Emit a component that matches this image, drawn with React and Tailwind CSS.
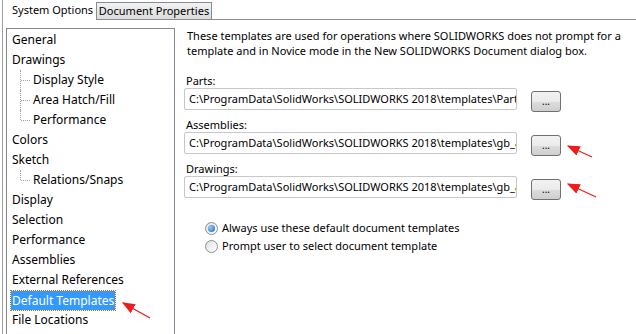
import React from 'react';

const noto = { fontFamily: '"Noto Sans", "Open Sans", sans-serif' };

const tree = [
  { label: 'General' },
  { label: 'Drawings' },
  { label: 'Display Style', child: true },
  { label: 'Area Hatch/Fill', child: true },
  { label: 'Performance', child: true, last: true },
  { label: 'Colors' },
  { label: 'Sketch' },
  { label: 'Relations/Snaps', child: true, last: true },
  { label: 'Display' },
  { label: 'Selection' },
  { label: 'Performance' },
  { label: 'Assemblies' },
  { label: 'External References' },
  { label: 'Default Templates', selected: true },
  { label: 'File Locations' },
];

const fields = [
  { label: 'Parts:', value: 'C:\\ProgramData\\SolidWorks\\SOLIDWORKS 2018\\templates\\Part.' },
  { label: 'Assemblies:', value: 'C:\\ProgramData\\SolidWorks\\SOLIDWORKS 2018\\templates\\gb_a' },
  { label: 'Drawings:', value: 'C:\\ProgramData\\SolidWorks\\SOLIDWORKS 2018\\templates\\gb_a' },
];

function TreeRow({ item }) {
  return (
    <div className="relative h-[20px] flex items-center">
      {item.child && (
        <>
          {/* tree connector lines */}
          <div
            className={`absolute left-[13px] top-0 w-0 border-l border-dotted border-[#a0a0a0] ${
              item.last ? 'h-[10px]' : 'h-[20px]'
            }`}
          />
          <div className="absolute left-[14px] top-[10px] w-[9px] h-0 border-t border-dotted border-[#a0a0a0]" />
        </>
      )}
      <span
        className={`${item.child ? 'ml-[25px]' : 'ml-[4px]'} ${
          item.selected
            ? 'bg-[#3399ff] text-white outline outline-1 outline-dotted outline-[#c07000] leading-[19px]'
            : 'text-black'
        } px-[1px] text-[12px] whitespace-nowrap`}
      >
        {item.label}
      </span>
    </div>
  );
}

function Radio({ checked, label }) {
  return (
    <div className="flex items-center h-[18px]">
      <span className="w-[13px] h-[13px] rounded-full border border-[#8e8f8f] bg-gradient-to-br from-[#e0e0e0] to-[#ffffff] flex items-center justify-center">
        {checked && (
          <span className="w-[7px] h-[7px] rounded-full bg-[radial-gradient(circle_at_35%_35%,#8fd0ff,#1d5fb8)]" />
        )}
      </span>
      <span className="ml-[4px] text-[11px] text-black">{label}</span>
    </div>
  );
}

export default function App() {
  return (
    <div className="relative w-[636px] h-[334px] overflow-hidden bg-white" style={noto}>
      <div className="ml-[2px] h-full border-l border-[#a0a0a0] flex flex-col">
        {/* tab strip */}
        <div className="flex h-[20px] shrink-0">
          <div className="w-[93px] flex items-center pl-[9px] text-[11px] text-black bg-white whitespace-nowrap">
            System Options
          </div>
          <div className="mt-[2px] h-[18px] w-[116px] border border-[#898c95] bg-gradient-to-b from-[#f2f2f2] to-[#dcdcdc] flex items-center justify-center text-[11px] text-black whitespace-nowrap">
            Document Properties
          </div>
          <div className="flex-1 border-b border-[#898c95]" />
        </div>

        {/* body */}
        <div className="flex flex-1 min-h-0">
          <div className="pl-[3px] pt-[8px] w-[175px] shrink-0">
            <div className="w-[169px] h-full border border-b-0 border-[#828790] pt-[1px]">
              {tree.map((item, i) => (
                <TreeRow key={i} item={item} />
              ))}
            </div>
          </div>

          <div className="flex-1 pl-[6px] pt-[8px]">
            <p className="ml-[3px] text-[11px] leading-[15px] text-black whitespace-nowrap">
              These templates are used for operations where SOLIDWORKS does not prompt for a<br />
              template and in Novice mode in the New SOLIDWORKS Document dialog box.
            </p>

            <div className="mt-[16px] flex flex-col">
              {fields.map((f) => (
                <div key={f.label} className="h-[44px]">
                  <div className="ml-[2px] text-[11px] leading-[14px] text-black">{f.label}</div>
                  <div className="flex items-start">
                    <div className="w-[333px] h-[22px] border border-[#c8c8c8] rounded-[2px] overflow-hidden flex items-center pl-[4px] text-[11px] text-black whitespace-nowrap">
                      {f.value}
                    </div>
                    <button className="ml-[14px] mt-[3px] w-[30px] h-[21px] rounded-[3px] border border-[#707070] bg-[linear-gradient(#f2f2f2_0%,#ebebeb_50%,#dddddd_51%,#cfcfcf_100%)] text-[10px] leading-none text-black flex items-end justify-center pb-[5px]">
                      ...
                    </button>
                  </div>
                </div>
              ))}
            </div>

            <div className="mt-[13px] ml-[21px] flex flex-col">
              <Radio checked label="Always use these default document templates" />
              <Radio label="Prompt user to select document template" />
            </div>
          </div>
        </div>
      </div>

      {/* red annotation arrows */}
      <svg className="absolute inset-0 pointer-events-none" width="636" height="334">
        <defs>
          <marker id="ah" markerWidth="10" markerHeight="8" refX="9" refY="4" orient="auto">
            <path d="M0,0 L10,4 L0,8 z" fill="#ee1c1c" />
          </marker>
        </defs>
        <line x1="150" y1="318" x2="123" y2="303" stroke="#ee1c1c" strokeWidth="1.3" markerEnd="url(#ah)" />
        <line x1="592" y1="157" x2="568" y2="146" stroke="#ee1c1c" strokeWidth="1.3" markerEnd="url(#ah)" />
        <line x1="596" y1="197" x2="568" y2="184" stroke="#ee1c1c" strokeWidth="1.3" markerEnd="url(#ah)" />
      </svg>
    </div>
  );
}
